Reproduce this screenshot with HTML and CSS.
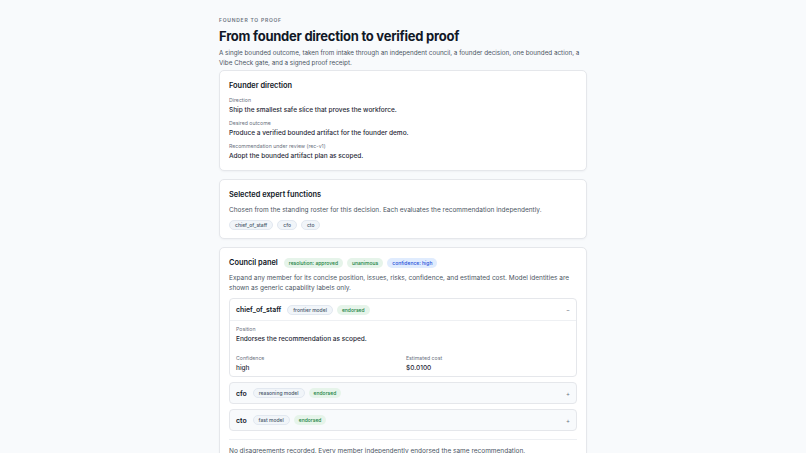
FILE: index.html
```html
<!DOCTYPE html>
<html lang="en">
  <head>
    <meta charset="UTF-8" />
    <meta name="viewport" content="width=device-width, initial-scale=1.0" />
    <title>Founder to proof</title>
    <link rel="stylesheet" href="styles.css">
  </head>
  <body>
    <main class="page">
      <header class="intro">
        <div class="eyebrow">Founder to proof</div>
        <h1>From founder direction to verified proof</h1>
        <p class="lead">A single bounded outcome, taken from intake through an independent council, a founder decision, one bounded action, a Vibe Check gate, and a signed proof receipt.</p>
      </header>

      <div class="stack">
        <section class="card direction">
          <h2>Founder direction</h2>
          <div class="field">
            <div class="label">Direction</div>
            <div class="value">Ship the smallest safe slice that proves the workforce.</div>
          </div>
          <div class="field">
            <div class="label">Desired outcome</div>
            <div class="value">Produce a verified bounded artifact for the founder demo.</div>
          </div>
          <div class="field">
            <div class="label">Recommendation under review (rec-v1)</div>
            <div class="value">Adopt the bounded artifact plan as scoped.</div>
          </div>
        </section>

        <section class="card">
          <h2>Selected expert functions</h2>
          <p class="text">Chosen from the standing roster for this decision. Each evaluates the recommendation independently.</p>
          <div class="chips">
            <span class="chip">chief_of_staff</span>
            <span class="chip">cfo</span>
            <span class="chip">cto</span>
          </div>
        </section>

        <section class="card">
          <div class="title-row">
            <h2>Council panel</h2>
            <span class="badge green">resolution: approved</span>
            <span class="badge green">unanimous</span>
            <span class="badge blue">confidence: high</span>
          </div>
          <p class="text">Expand any member for its concise position, issues, risks, confidence, and estimated cost. Model identities are shown as generic capability labels only.</p>

          <div class="members">
            <div class="member open">
              <div class="member-head">
                <span class="member-name">chief_of_staff</span>
                <span class="chip">frontier model</span>
                <span class="badge green">endorsed</span>
                <span class="toggle">−</span>
              </div>
              <div class="member-body">
                <div class="label">Position</div>
                <div class="value">Endorses the recommendation as scoped.</div>
                <div class="stats">
                  <div>
                    <div class="label">Confidence</div>
                    <div class="value">high</div>
                  </div>
                  <div>
                    <div class="label">Estimated cost</div>
                    <div class="value">$0.0100</div>
                  </div>
                </div>
              </div>
            </div>
            <div class="member">
              <div class="member-head">
                <span class="member-name">cfo</span>
                <span class="chip">reasoning model</span>
                <span class="badge green">endorsed</span>
                <span class="toggle">+</span>
              </div>
            </div>
            <div class="member">
              <div class="member-head">
                <span class="member-name">cto</span>
                <span class="chip">fast model</span>
                <span class="badge green">endorsed</span>
                <span class="toggle">+</span>
              </div>
            </div>
          </div>

          <p class="text summary">No disagreements recorded. Every member independently endorsed the same recommendation.</p>
        </section>
      </div>
    </main>
  </body>
</html>
```

FILE: styles.css
```css
* {
  box-sizing: border-box;
}
body {
  margin: 0;
  font-family: Inter, "Noto Sans", sans-serif;
  background: #f8fafc;
  color: #111827;
}
.page {
  width: 368px;
  margin: 0 auto;
  padding-top: 17px;
}
.intro {
  margin-bottom: 2px;
}
.stack {
  display: flex;
  flex-direction: column;
  gap: 8px;
}
.eyebrow {
  font-size: 5px;
  line-height: 6px;
  font-weight: 600;
  letter-spacing: 0.75px;
  text-transform: uppercase;
  color: #6b7280;
}
h1 {
  margin: 2px 0 0;
  font-size: 13px;
  line-height: 22px;
  font-weight: 700;
  letter-spacing: -0.25px;
  color: #111827;
}
.lead {
  margin: 1px 0 0;
  font-size: 6.3px;
  line-height: 10px;
  color: #4b5563;
}
.card {
  background: #ffffff;
  border: 1px solid #e5e7eb;
  border-radius: 5px;
  box-shadow: 0 1px 2px rgba(15, 23, 42, 0.04);
  padding: 9px 9px 8px;
}
.direction {
  padding-bottom: 9px;
}
h2 {
  margin: 0;
  font-size: 7.4px;
  line-height: 12px;
  font-weight: 600;
  color: #111827;
}
.field {
  margin-top: 5px;
}
.label {
  font-size: 5.2px;
  line-height: 6px;
  color: #6b7280;
}
.value {
  margin-top: 2px;
  font-size: 6.5px;
  line-height: 10px;
  font-weight: 500;
  color: #1f2937;
}
.text {
  margin: 4px 0 0;
  font-size: 6.5px;
  line-height: 10px;
  color: #4b5563;
}
.chips {
  display: flex;
  gap: 4px;
  margin-top: 5px;
}
.chip,
.badge {
  display: inline-flex;
  align-items: center;
  height: 10px;
  padding: 0 5px;
  border-radius: 5px;
  font-size: 5px;
  font-weight: 500;
  white-space: nowrap;
}
.chip {
  background: #f1f5f9;
  border: 1px solid #e2e8f0;
  color: #475569;
}
.badge.green {
  background: #e6f4ea;
  color: #15803d;
}
.badge.blue {
  background: #e0ecfe;
  color: #1d4ed8;
}
.title-row {
  display: flex;
  align-items: center;
  gap: 4px;
}
.title-row h2 {
  margin-right: 2px;
}
.members {
  display: flex;
  flex-direction: column;
  gap: 5px;
  margin-top: 5px;
}
.member {
  border: 1px solid #e5e7eb;
  border-radius: 4px;
  background: #f8fafc;
}
.member.open {
  background: #ffffff;
}
.member-head {
  display: flex;
  align-items: center;
  gap: 4px;
  height: 20px;
  padding: 0 6px;
}
.member.open .member-head {
  height: 22px;
  border-bottom: 1px solid #eef0f3;
}
.member-name {
  font-size: 6.9px;
  font-weight: 600;
  color: #111827;
  margin-right: 2px;
}
.toggle {
  margin-left: auto;
  font-size: 6px;
  color: #6b7280;
}
.member-body {
  padding: 5px 6px 3px;
}
.stats {
  display: grid;
  grid-template-columns: 1fr 1fr;
  gap: 0 6px;
  margin-top: 11px;
}
.summary {
  margin-top: 8px;
  padding-top: 6px;
  border-top: 1px solid #eef0f3;
}
```
